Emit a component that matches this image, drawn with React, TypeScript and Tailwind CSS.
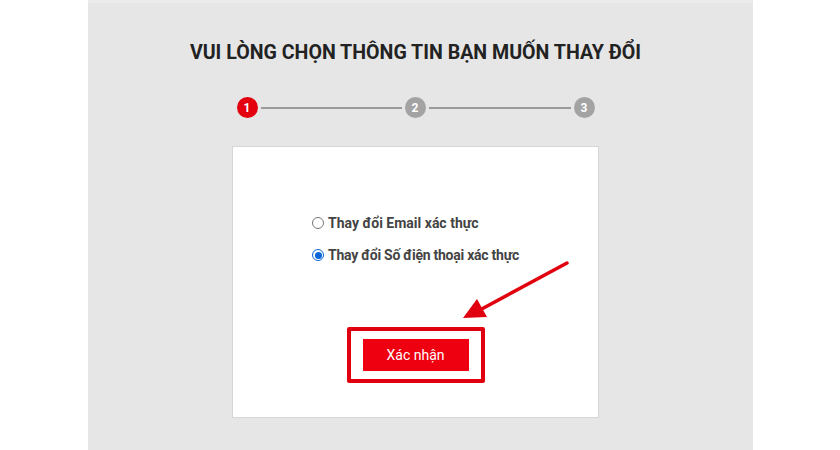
export default function App() {
    return (
        <div className="flex h-[450px] w-[840px] justify-center overflow-hidden bg-white font-['Roboto',sans-serif]">
            <div className="flex w-[665px] flex-col items-center border-t-[3px] border-[#ebebeb] bg-[#e6e6e6] pt-[36px] pr-[9px]">
                {/* Title */}
                <h1 className="h-[28px] text-[19.6px] leading-[28px] font-bold text-[#222]">
                    VUI LÒNG CHỌN THÔNG TIN BẠN MUỐN THAY ĐỔI
                </h1>

                {/* Steps */}
                <div className="mt-[30px] flex items-center">
                    <div className="flex h-[21px] w-[21px] items-center justify-center rounded-full bg-[#e3000f] text-[12px] font-bold text-white">1</div>
                    <div className="mx-[3px] h-[2px] w-[141px] bg-[#9b9b9b]"></div>
                    <div className="flex h-[21px] w-[21px] items-center justify-center rounded-full bg-[#a3a3a3] text-[12px] font-bold text-white">2</div>
                    <div className="mx-[3px] h-[2px] w-[142px] bg-[#9b9b9b]"></div>
                    <div className="flex h-[21px] w-[21px] items-center justify-center rounded-full bg-[#a3a3a3] text-[12px] font-bold text-white">3</div>
                </div>

                {/* Card */}
                <div className="relative mt-[28px] flex h-[272px] w-[367px] flex-col items-center border border-[#d6d6d6] bg-white">
                    <div className="mt-[69px] flex flex-col gap-[18px]">
                        <label className="flex items-center gap-[4px] text-[14px] leading-[14px] font-bold text-[#444]">
                            <span className="h-[12px] w-[12px] rounded-full border border-[#767676] bg-white"></span>
                            Thay đổi Email xác thực
                        </label>
                        <label className="flex items-center gap-[4px] text-[14px] leading-[14px] font-bold tracking-[-0.25px] text-[#444]">
                            <span className="flex h-[12px] w-[12px] items-center justify-center rounded-full border border-[#0a66d8] bg-white">
                                <span className="h-[7px] w-[7px] rounded-full bg-[#0a66d8]"></span>
                            </span>
                            Thay đổi Số điện thoại xác thực
                        </label>
                    </div>

                    <div className="mt-[65px] rounded-[2px] border-[4px] border-[#e00010] px-[12px] py-[8px]">
                        <button className="h-[32px] w-[106px] bg-[#ee0010] text-[14px] text-white">Xác nhận</button>
                    </div>

                    {/* annotation arrow */}
                    <svg className="absolute top-[112px] left-[225px]" width="115" height="65" viewBox="0 0 115 65">
                        <line x1="109" y1="4" x2="20" y2="52" stroke="#e0000f" strokeWidth="3.5" strokeLinecap="round" />
                        <polygon points="5,59 19,40 29,58" fill="#e0000f" />
                    </svg>
                </div>
            </div>
        </div>
    );
}
